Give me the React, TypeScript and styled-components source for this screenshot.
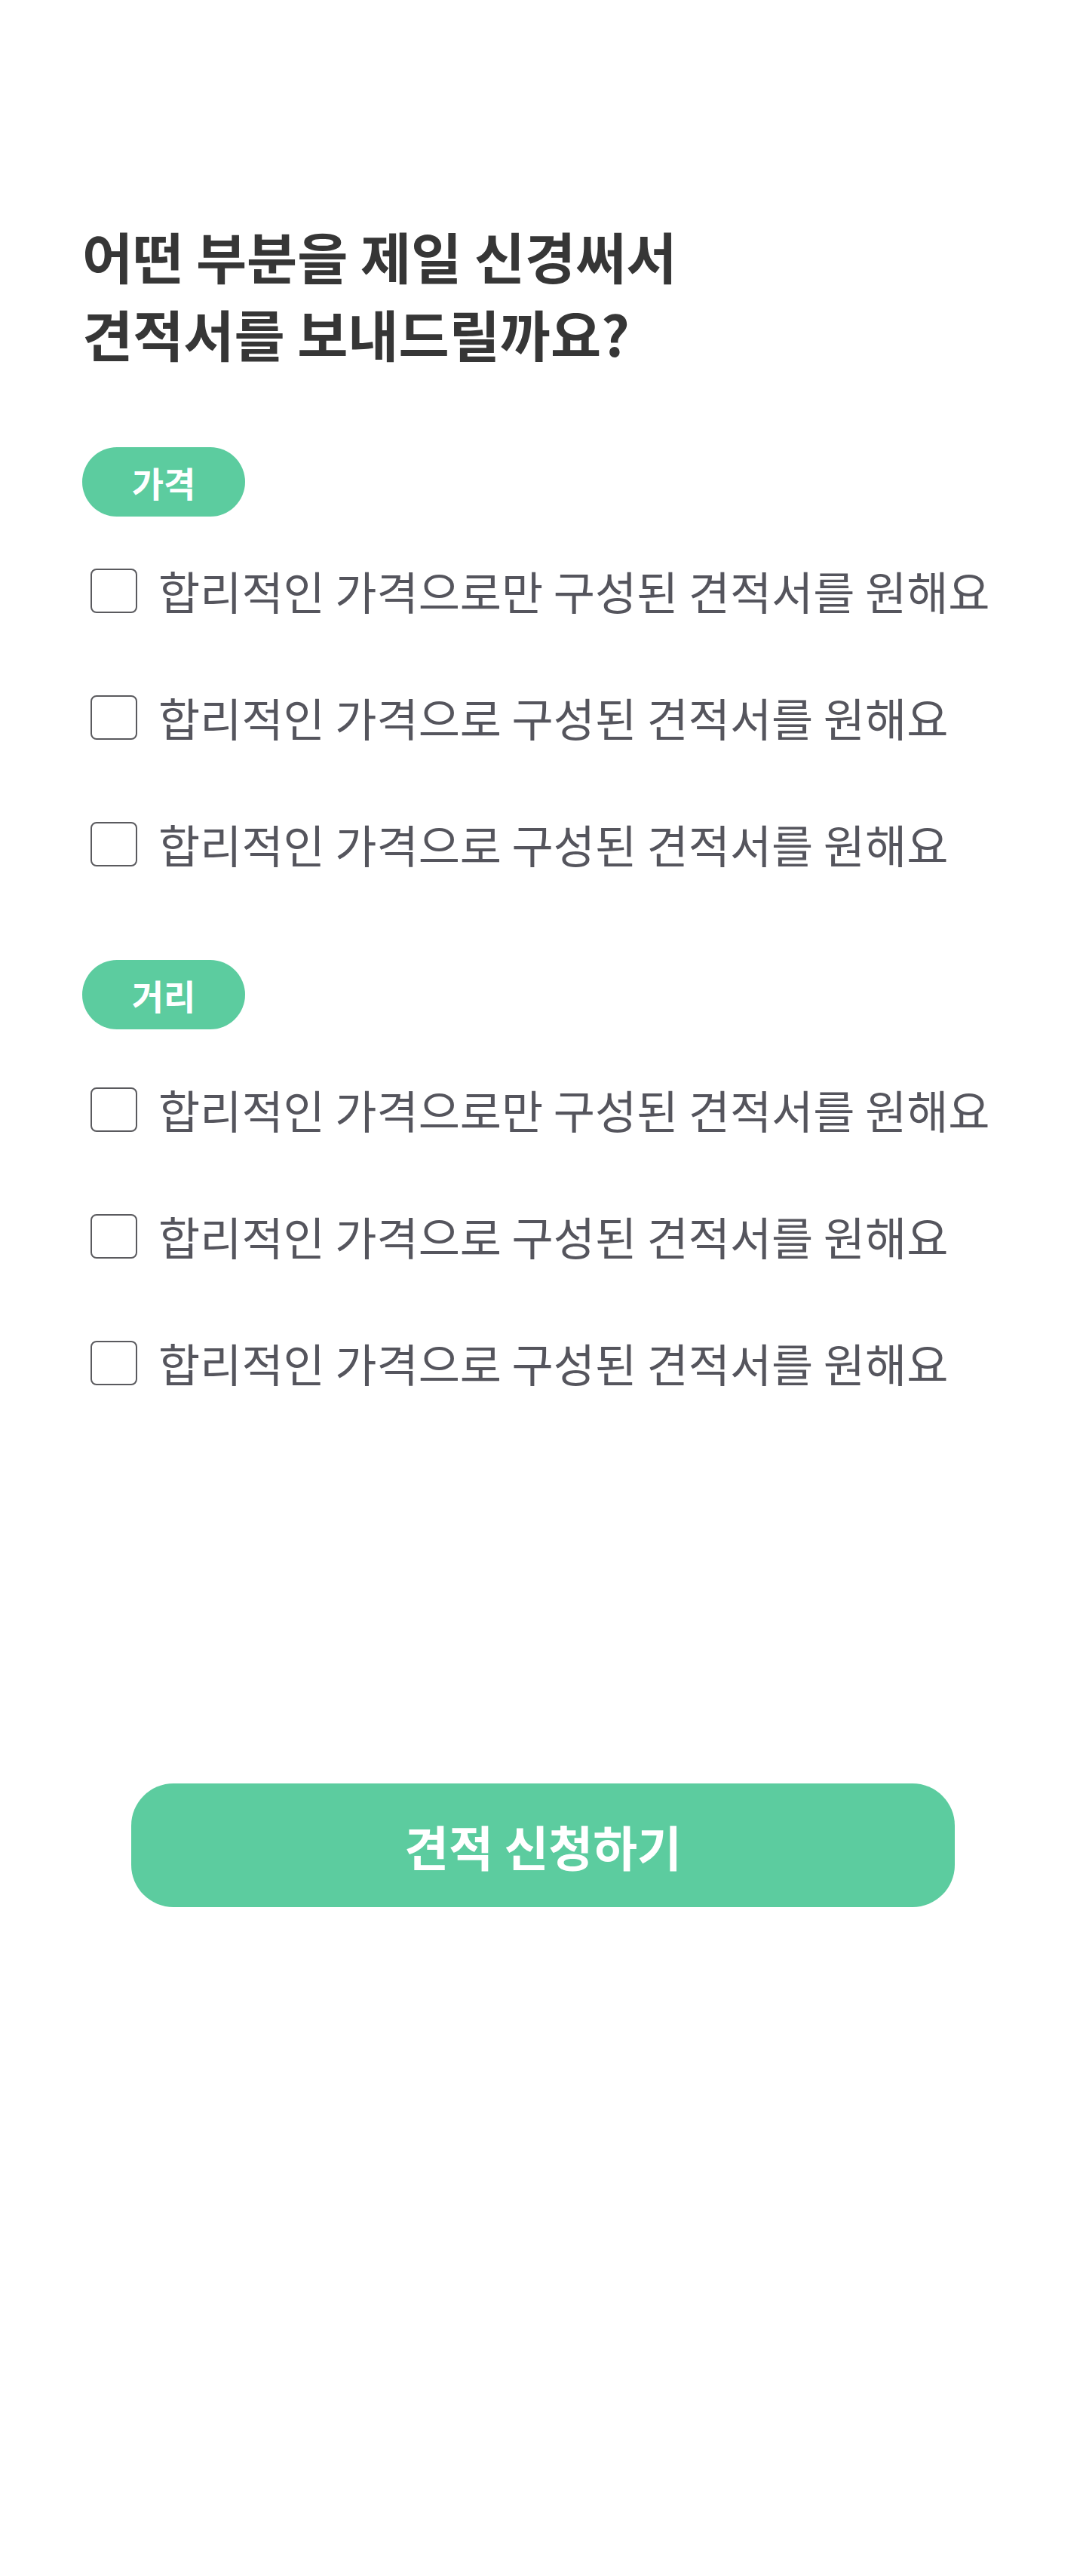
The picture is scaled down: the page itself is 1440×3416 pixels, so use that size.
import React from "react";
import styled, { createGlobalStyle } from "styled-components";

const GlobalStyle = createGlobalStyle`
  html, body {
    margin: 0;
    padding: 0;
    background: #ffffff;
  }
  body {
    font-family: "Noto Sans CJK KR", "Noto Sans", sans-serif;
  }
  * { box-sizing: border-box; }
`;

const Page = styled.main`
  width: 1440px;
  min-height: 3416px;
  padding: 287px 109px 0 109px;
  display: flex;
  flex-direction: column;
`;

const Heading = styled.h1`
  margin: 0;
  font-size: 73px;
  line-height: 103px;
  font-weight: 700;
  color: #363636;
  letter-spacing: 0;
`;

const Sections = styled.div`
  margin-top: 100px;
  display: flex;
  flex-direction: column;
  gap: 70px;
`;

const Section = styled.section`
  display: flex;
  flex-direction: column;
  align-items: flex-start;
`;

const Tag = styled.span`
  display: inline-flex;
  align-items: center;
  justify-content: center;
  width: 216px;
  height: 92px;
  border-radius: 46px;
  background: #5ccc9f;
  color: #ffffff;
  font-size: 46px;
  font-weight: 700;
  line-height: 1;
`;

const OptionList = styled.ul<{ $lead: number }>`
  list-style: none;
  margin: ${(p) => p.$lead}px 0 0 0;
  padding: 0;
  display: flex;
  flex-direction: column;
`;

const OptionRow = styled.li`
  height: 168px;
  display: flex;
  align-items: center;
`;

const OptionLabel = styled.label`
  display: flex;
  align-items: center;
  gap: 28px;
  padding-left: 11px;
  cursor: pointer;
`;

const Box = styled.input`
  appearance: none;
  -webkit-appearance: none;
  margin: 0;
  width: 62px;
  height: 59px;
  border: 2px solid #5a5a5e;
  border-radius: 8px;
  background: #ffffff;
  flex: none;
`;

const OptionText = styled.span`
  font-size: 60px;
  font-weight: 400;
  color: #55555d;
  line-height: 1;
  white-space: nowrap;
`;

const SubmitWrap = styled.div`
  margin-top: 474px;
  display: flex;
  justify-content: center;
`;

const SubmitButton = styled.button`
  width: 1092px;
  height: 164px;
  border: none;
  border-radius: 56px;
  background: #5ccc9f;
  color: #ffffff;
  font-family: "Noto Sans CJK KR", "Noto Sans", sans-serif;
  font-size: 64px;
  font-weight: 700;
  cursor: pointer;
`;

const groups = [
  {
    tag: "가격",
    lead: 14,
    options: [
      "합리적인 가격으로만 구성된 견적서를 원해요",
      "합리적인 가격으로 구성된 견적서를 원해요",
      "합리적인 가격으로 구성된 견적서를 원해요",
    ],
  },
  {
    tag: "거리",
    lead: 22,
    options: [
      "합리적인 가격으로만 구성된 견적서를 원해요",
      "합리적인 가격으로 구성된 견적서를 원해요",
      "합리적인 가격으로 구성된 견적서를 원해요",
    ],
  },
];

export default function App() {
  return (
    <>
      <GlobalStyle />
      <Page>
        <Heading>
          어떤 부분을 제일 신경써서
          <br />
          견적서를 보내드릴까요?
        </Heading>
        <Sections>
          {groups.map((g, gi) => (
            <Section key={gi}>
              <Tag>{g.tag}</Tag>
              <OptionList $lead={g.lead}>
                {g.options.map((o, oi) => (
                  <OptionRow key={oi}>
                    <OptionLabel>
                      <Box type="checkbox" />
                      <OptionText>{o}</OptionText>
                    </OptionLabel>
                  </OptionRow>
                ))}
              </OptionList>
            </Section>
          ))}
        </Sections>
        <SubmitWrap>
          <SubmitButton type="button">견적 신청하기</SubmitButton>
        </SubmitWrap>
      </Page>
    </>
  );
}
